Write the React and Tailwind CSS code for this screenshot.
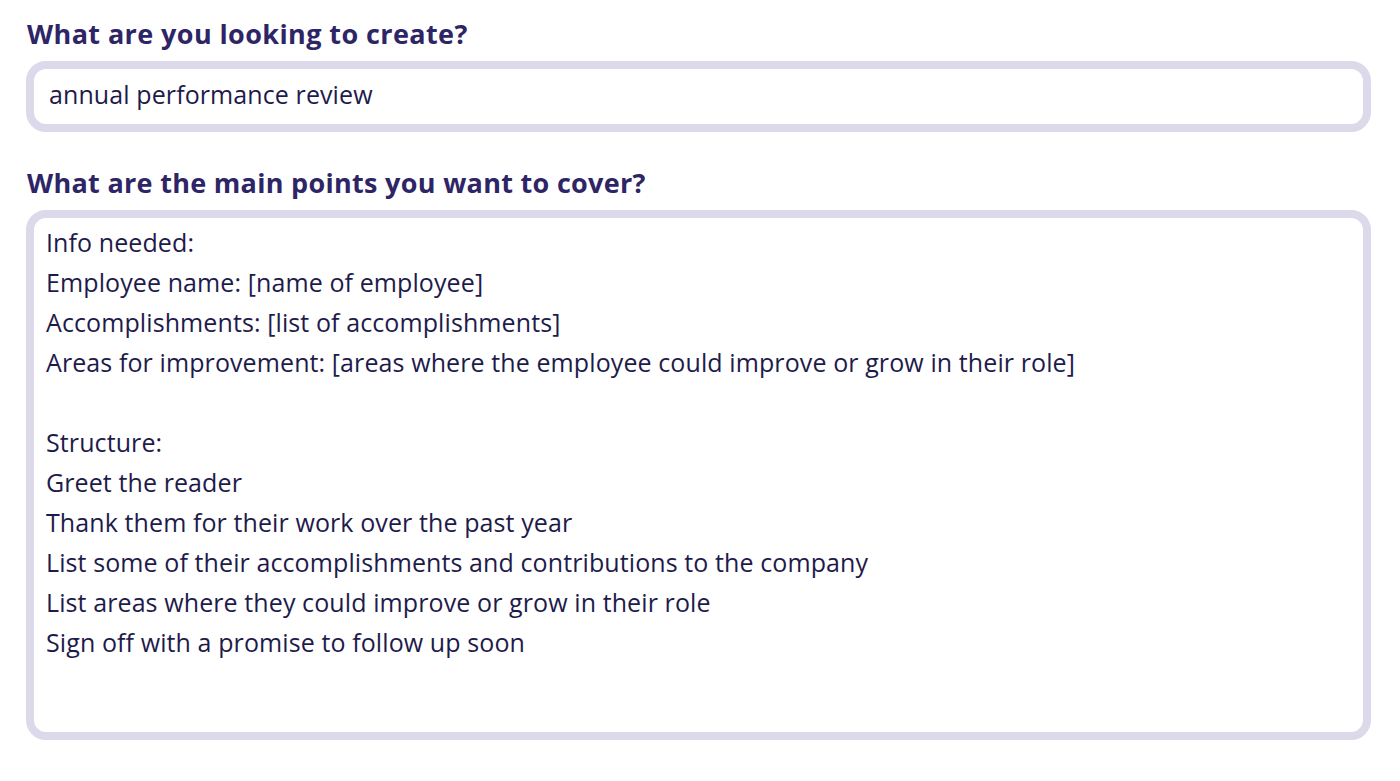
const lines = [
  'Info needed:',
  'Employee name: [name of employee]',
  'Accomplishments: [list of accomplishments]',
  'Areas for improvement: [areas where the employee could improve or grow in their role]',
  '',
  'Structure:',
  'Greet the reader',
  'Thank them for their work over the past year',
  'List some of their accomplishments and contributions to the company',
  'List areas where they could improve or grow in their role',
  'Sign off with a promise to follow up soon',
];

export default function App() {
  return (
    <div className="h-[781px] w-[1400px] bg-white px-[26px] pt-[16px] font-['Open_Sans',sans-serif] text-[#1e1b4b]">
      <h2 className="ml-[1px] text-[27px] font-bold leading-[36px] tracking-[0.4px] text-[#2e2566]">What are you looking to create?</h2>
      <div className="mt-[9px] flex h-[71px] w-[1345px] items-center rounded-[20px] border-[8px] border-[#dcd9ea] px-[15px] pb-[4px] text-[25px] tracking-[0.1px]">
        annual performance review
      </div>
      <h2 className="ml-[1px] mt-[33px] text-[27px] font-bold leading-[36px] tracking-[0.3px] text-[#2e2566]">What are the main points you want to cover?</h2>
      <div className="mt-[9px] h-[530px] w-[1345px] rounded-[20px] border-[8px] border-[#dcd9ea] px-[12px] pt-[4px] text-[25px] leading-[40px] tracking-[0.1px]">
        {lines.map((l, i) => (
          <div key={i} className="h-[40px]">{l}</div>
        ))}
      </div>
    </div>
  );
}
